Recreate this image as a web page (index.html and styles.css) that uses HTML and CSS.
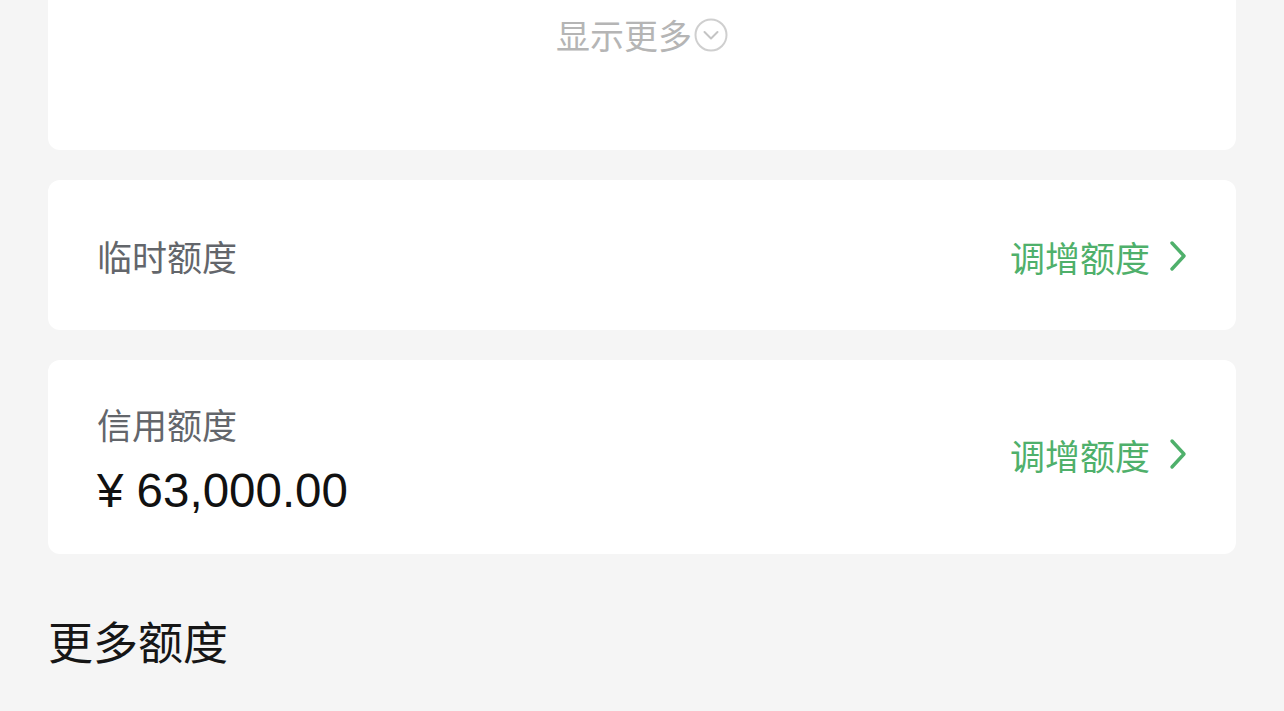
FILE: index.html
```html
<!DOCTYPE html>
<html lang="zh-CN">
<head>
    <meta charset="UTF-8">
    <meta name="viewport" content="width=device-width, initial-scale=1.0">
    <title>额度</title>
    <link rel="stylesheet" href="styles.css">
</head>
<body>
    <div class="page">
        <div class="card card-top">
            <div class="show-more">
                <span>显示更多</span>
                <svg class="more-icon" width="34" height="34" viewBox="0 0 34 34">
                    <circle cx="17" cy="17" r="15.5" fill="none" stroke="#cfcfcf" stroke-width="2"/>
                    <path d="M10.5 14 L17 20.5 L23.5 14" fill="none" stroke="#c4c4c4" stroke-width="2" stroke-linecap="round" stroke-linejoin="round"/>
                </svg>
            </div>
        </div>

        <div class="card card-row">
            <div class="label">临时额度</div>
            <a class="action" href="#">
                调增额度
                <svg class="chevron" width="20" height="32" viewBox="0 0 20 32">
                    <path d="M4 3 L16 16 L4 29" fill="none" stroke="#4fb06b" stroke-width="3.4" stroke-linecap="round" stroke-linejoin="round"/>
                </svg>
            </a>
        </div>

        <div class="card card-row card-credit">
            <div class="info">
                <div class="label">信用额度</div>
                <div class="amount">¥ 63,000.00</div>
            </div>
            <a class="action" href="#">
                调增额度
                <svg class="chevron" width="20" height="32" viewBox="0 0 20 32">
                    <path d="M4 3 L16 16 L4 29" fill="none" stroke="#4fb06b" stroke-width="3.4" stroke-linecap="round" stroke-linejoin="round"/>
                </svg>
            </a>
        </div>

        <h2 class="section-title">更多额度</h2>
    </div>
</body>
</html>
```

FILE: styles.css
```css
body {
    margin: 0;
    background: #f5f5f5;
    font-family: "Noto Sans CJK SC", "Noto Sans", sans-serif;
    overflow: hidden;
}

.page {
    padding: 0 48px;
}

.card {
    background: #fff;
    border-radius: 12px;
    margin-bottom: 30px;
}

.card-top {
    border-top-left-radius: 0;
    border-top-right-radius: 0;
    height: 150px;
    box-sizing: border-box;
    padding-top: 14px;
}

.show-more {
    display: flex;
    justify-content: center;
    align-items: center;
    font-size: 34px;
    line-height: 42px;
    color: #b5b5b5;
}

.more-icon {
    margin-left: 2px;
}

.card-row {
    display: flex;
    justify-content: space-between;
    align-items: center;
    height: 150px;
    box-sizing: border-box;
    padding: 0 48px 0 49px;
}

.card-credit {
    height: 194px;
}

.card-credit .info {
    align-self: flex-start;
    padding-top: 42px;
}

.label {
    font-size: 35px;
    line-height: 44px;
    color: #63666b;
}

.card-row > .label {
    margin-top: 2px;
}

.amount {
    font-family: "Liberation Sans", Arial, sans-serif;
    font-size: 47.5px;
    line-height: 54px;
    margin-top: 18px;
    color: #111;
}

.action {
    display: flex;
    align-items: center;
    gap: 18px;
    font-size: 35px;
    color: #4fb06b;
    text-decoration: none;
    margin-top: 2px;
}

.card-credit .action {
    margin-top: -6px;
}

.section-title {
    margin: 59px 0 0 0;
    font-size: 45px;
    font-weight: normal;
    line-height: 56px;
    color: #161616;
}
```
